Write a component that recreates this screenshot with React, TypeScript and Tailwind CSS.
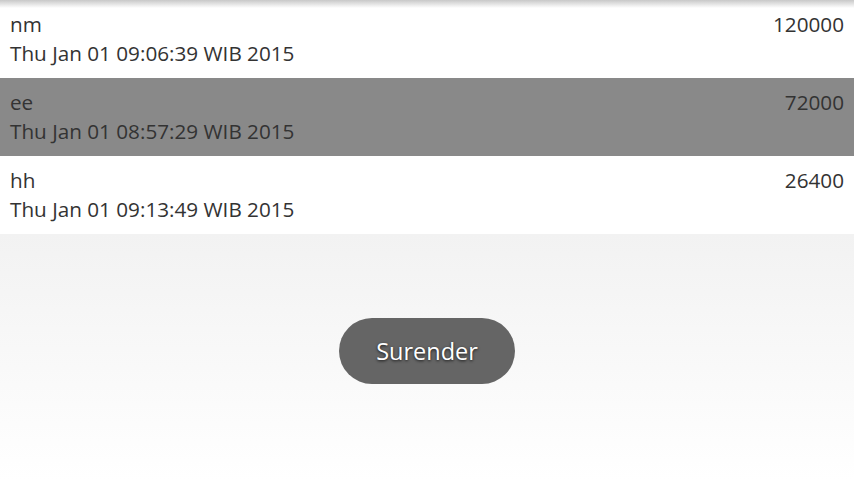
const rows = [
  { name: "nm", date: "Thu Jan 01 09:06:39 WIB 2015", score: "120000", active: false },
  { name: "ee", date: "Thu Jan 01 08:57:29 WIB 2015", score: "72000", active: true },
  { name: "hh", date: "Thu Jan 01 09:13:49 WIB 2015", score: "26400", active: false },
]

export default function App() {
  return (
    <div
      className="relative flex h-[480px] w-[854px] flex-col overflow-hidden bg-white text-[#333333]"
      style={{ fontFamily: '"Open Sans", "Noto Sans", sans-serif' }}
    >
      {/* top shadow from the action bar */}
      <div className="pointer-events-none absolute inset-x-0 top-0 h-[8px] bg-gradient-to-b from-[#c8c8c8] to-white/0" />
      <ul>
        {rows.map((r) => (
          <li
            key={r.name}
            className={`flex h-[78px] justify-between px-[10px] pt-[10px] ${r.active ? "bg-[#898989]" : "bg-white"}`}
          >
            <div className="flex flex-col">
              <span className="text-[20.7px] leading-[29px]">{r.name}</span>
              <span className="text-[20.7px] leading-[29px]">{r.date}</span>
            </div>
            <span className="text-[20.7px] leading-[29px]">{r.score}</span>
          </li>
        ))}
      </ul>
      <div className="flex flex-1 items-start justify-center bg-gradient-to-b from-[#f2f2f2] to-white pt-[84px]">
        <button className="h-[66px] w-[176px] rounded-full bg-[#656565] pt-[2px] text-[23.5px] text-white [text-shadow:0_1px_3px_rgba(0,0,0,0.8)]">
          Surender
        </button>
      </div>
    </div>
  )
}
